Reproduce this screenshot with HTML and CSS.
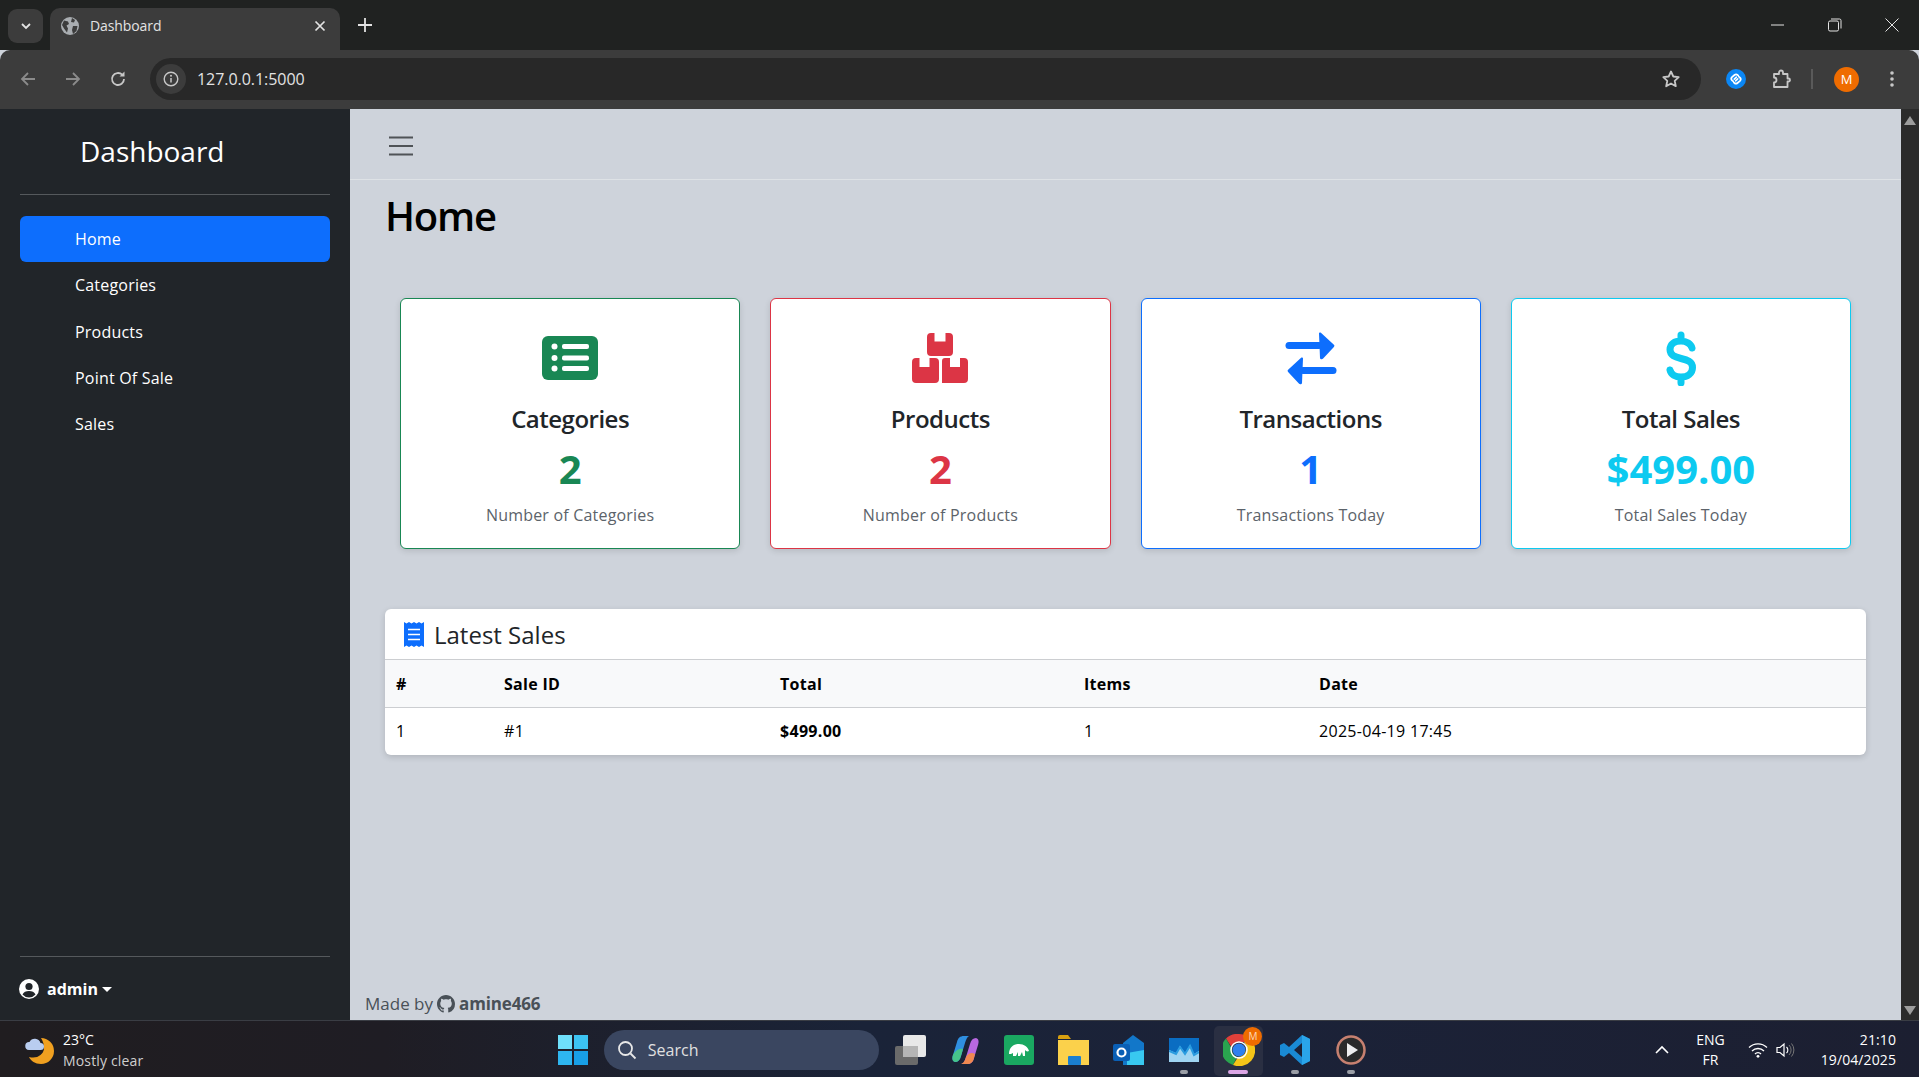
FILE: index.html
```html
<!DOCTYPE html>
<html lang="en">
<head>
    <meta charset="UTF-8">
    <title>Dashboard</title>
    <link rel="stylesheet" href="styles.css">
</head>
<body>
    <!-- Browser chrome -->
    <div class="tabstrip">
        <div class="tab-search">
            <svg width="12" height="12" viewBox="0 0 12 12"><path d="M2 4l4 4 4-4" fill="none" stroke="#e3e3e3" stroke-width="1.8"/></svg>
        </div>
        <div class="tab">
            <svg class="tab-globe" width="18" height="18" viewBox="0 0 18 18"><circle cx="9" cy="9" r="9" fill="#a9adb1"/><path d="M3 3.500l4 1 1 2.500-2.500 1.500 1.500 3-1 4-3-4-2-3.500zM11 1l3 2-1 2.500-3-.5zM12 9l4.500 0-1 5-3.500 3-1-4z" fill="#3c3c3c"/></svg>
            <span class="tab-title">Dashboard</span>
            <svg width="12" height="12" viewBox="0 0 12 12"><path d="M1.500 1.500l9 9M10.500 1.500l-9 9" stroke="#e3e3e3" stroke-width="1.700"/></svg>
        </div>
        <svg class="new-tab" width="14" height="14" viewBox="0 0 14 14"><path d="M7 0v14M0 7h14" stroke="#e3e3e3" stroke-width="1.800"/></svg>
        <div class="win-controls">
            <svg width="14" height="14" viewBox="0 0 14 14"><path d="M0 7h13" stroke="#e3e3e3" stroke-width="1"/></svg>
            <svg width="14" height="14" viewBox="0 0 14 14"><rect x="0.500" y="3" width="10" height="10" rx="1.500" fill="none" stroke="#e3e3e3"/><path d="M3 1h8.500a1.500 1.500 0 0 1 1.500 1.500v8" fill="none" stroke="#e3e3e3"/></svg>
            <svg width="14" height="14" viewBox="0 0 14 14"><path d="M0.500 0.500l13 13M13.500 0.500l-13 13" stroke="#e3e3e3" stroke-width="1"/></svg>
        </div>
    </div>
    <div class="toolbar">
        <svg class="nav-btn" width="18" height="18" viewBox="0 0 18 18"><path d="M16 9H3M9 3L3 9l6 6" fill="none" stroke="#8b8b8b" stroke-width="1.800"/></svg>
        <svg class="nav-btn" width="18" height="18" viewBox="0 0 18 18"><path d="M2 9h13M9 3l6 6-6 6" fill="none" stroke="#8b8b8b" stroke-width="1.800"/></svg>
        <svg class="nav-btn" width="18" height="18" viewBox="0 0 18 18"><path d="M15 9a6 6 0 1 1-1.800-4.300" fill="none" stroke="#c7c7c7" stroke-width="1.800"/><path d="M15.500 1.500v5h-5z" fill="#c7c7c7"/></svg>
        <div class="urlbar">
            <span class="site-info">
                <svg width="16" height="16" viewBox="0 0 16 16"><circle cx="8" cy="8" r="6.800" fill="none" stroke="#c7c7c7" stroke-width="1.400"/><path d="M8 7v4.500" stroke="#c7c7c7" stroke-width="1.500"/><circle cx="8" cy="4.800" r="1" fill="#c7c7c7"/></svg>
            </span>
            <span class="url-text">127.0.0.1:5000</span>
            <svg class="star" width="20" height="20" viewBox="0 0 20 20"><path d="M10 2.500l2.300 5 5.400.6-4 3.700 1.100 5.400-4.800-2.700-4.800 2.700 1.100-5.400-4-3.700 5.400-.6z" fill="none" stroke="#c7c7c7" stroke-width="1.800" stroke-linejoin="round"/></svg>
        </div>
        <div class="ext-icons">
            <svg width="20" height="20" viewBox="0 0 20 20"><circle cx="10" cy="10" r="10" fill="#0b87f5"/><path d="M12.300 6.600l-.7-.6a2.300 2.300 0 0 0-3.100 0L6 8.200a2.200 2.200 0 0 0 0 3.100l1.300 1.100M7.700 13.400l.7.600a2.300 2.300 0 0 0 3.100 0l2.500-2.200a2.200 2.200 0 0 0 0-3.100l-1.300-1.100M8.300 10.100l2.100-1.900M11.700 9.900l-2.100 1.900" fill="none" stroke="#fff" stroke-width="1.700" stroke-linecap="round"/></svg>
            <svg width="20" height="20" viewBox="0 0 20 20"><path d="M2 5h5V3.500a2 2 0 0 1 4 0V5h4.500v4.500h1a1.500 1.500 0 0 1 0 3h-1V18H2v-4.500a2.500 2.500 0 0 0 0-5z" fill="none" stroke="#c7c7c7" stroke-width="1.800" stroke-linejoin="round"/></svg>
            <span class="ext-sep"></span>
            <span class="avatar">M</span>
            <svg width="4" height="16" viewBox="0 0 4 16"><circle cx="2" cy="2" r="1.800" fill="#c7c7c7"/><circle cx="2" cy="8" r="1.800" fill="#c7c7c7"/><circle cx="2" cy="14" r="1.800" fill="#c7c7c7"/></svg>
        </div>
    </div>

    <!-- Page -->
    <div class="app">
        <aside class="sidebar">
            <div class="brand">Dashboard</div>
            <hr class="side-rule">
            <ul class="side-nav">
                <li class="side-link active">Home</li>
                <li class="side-link">Categories</li>
                <li class="side-link">Products</li>
                <li class="side-link">Point Of Sale</li>
                <li class="side-link">Sales</li>
            </ul>
            <hr class="side-rule">
            <div class="side-user">
                <svg width="20" height="20" viewBox="0 0 20 20"><circle cx="10" cy="10" r="10" fill="#fff"/><circle cx="10" cy="7.500" r="3.600" fill="#212529"/><path d="M3.500 15.500c1-2.500 3.500-3.500 6.500-3.500s5.500 1 6.500 3.500a8.500 8.500 0 0 1-13 0z" fill="#212529"/></svg>
                <strong>admin</strong>
                <span class="caret"></span>
            </div>
        </aside>

        <main class="main">
            <nav class="topbar">
                <svg width="26" height="22" viewBox="0 0 26 22"><path d="M1 2.500h24M1 11h24M1 19.500h24" stroke="#4f5357" stroke-width="2"/></svg>
            </nav>
            <div class="content">
                <h1 class="page-title">Home</h1>
                <div class="stat-row">
                    <div class="stat-card green">
                        <svg class="stat-icon" width="56" height="56" viewBox="0 0 56 56"><rect x="0" y="6" width="56" height="44" rx="6" fill="currentColor"/><circle cx="12.500" cy="16.500" r="3" fill="#fff"/><circle cx="12.500" cy="28" r="3" fill="#fff"/><circle cx="12.500" cy="38.500" r="3" fill="#fff"/><rect x="20" y="14" width="27" height="5" rx="2" fill="#fff"/><rect x="20" y="25.500" width="27" height="5" rx="2" fill="#fff"/><rect x="20" y="36" width="27" height="5" rx="2" fill="#fff"/></svg>
                        <h5 class="stat-title">Categories</h5>
                        <div class="stat-value">2</div>
                        <p class="stat-desc">Number of Categories</p>
                    </div>
                    <div class="stat-card red">
                        <svg class="stat-icon" width="56" height="56" viewBox="0 0 56 56"><path d="M19 3h3.500v8.500h11V3H37a4 4 0 0 1 4 4v15a4 4 0 0 1-4 4H19a4 4 0 0 1-4-4V7a4 4 0 0 1 4-4z" fill="currentColor"/><path d="M4 28h3.500v9h10v-9H23a4 4 0 0 1 4 4v17a4 4 0 0 1-4 4H4a4 4 0 0 1-4-4V32a4 4 0 0 1 4-4z" fill="currentColor"/><path d="M33 28h5v9h10v-9h4a4 4 0 0 1 4 4v17a4 4 0 0 1-4 4H30V31a3 3 0 0 1 3-3z" fill="currentColor"/></svg>
                        <h5 class="stat-title">Products</h5>
                        <div class="stat-value">2</div>
                        <p class="stat-desc">Number of Products</p>
                    </div>
                    <div class="stat-card blue">
                        <svg class="stat-icon" width="56" height="56" viewBox="0 0 56 56"><path d="M6 15.500h30" stroke="currentColor" stroke-width="7" stroke-linecap="round"/><path d="M36 3.500c0-1 1.200-1.400 1.900-.7l13 12a1.500 1.500 0 0 1 0 2.200l-11 11.800c-.9.800-2.900.400-2.900-.8z" fill="currentColor"/><path d="M50 40.500H20" stroke="currentColor" stroke-width="7" stroke-linecap="round"/><path d="M20 28.500c0-1-1.200-1.400-1.900-.7l-13 12a1.500 1.500 0 0 0 0 2.200l11 11.800c.9.800 2.900.400 2.900-.8z" fill="currentColor"/></svg>
                        <h5 class="stat-title">Transactions</h5>
                        <div class="stat-value">1</div>
                        <p class="stat-desc">Transactions Today</p>
                    </div>
                    <div class="stat-card cyan">
                        <svg class="stat-icon" width="56" height="56" viewBox="0 0 56 56"><path d="M28 5v6M28 47v6M39 18c-1-4-5.500-7-11-7-6.500 0-11 3-11 8.500 0 6 5.500 7.500 11 9 6 1.500 11.500 3 11.500 9 0 6-5 9.500-11.500 9.500-5.500 0-10-2.500-11-7" fill="none" stroke="currentColor" stroke-width="7" stroke-linecap="round"/></svg>
                        <h5 class="stat-title">Total Sales</h5>
                        <div class="stat-value">$499.00</div>
                        <p class="stat-desc">Total Sales Today</p>
                    </div>
                </div>

                <div class="sales-card">
                    <div class="sales-head">
                        <svg width="20" height="25" viewBox="0 0 20 25"><path d="M0 0l2.500 1.500L5 0l2.500 1.500L10 0l2.500 1.500L15 0l2.500 1.500L20 0v25l-2.500-1.500L15 25l-2.500-1.500L10 25l-2.500-1.500L5 25l-2.500-1.500L0 25z" fill="#0d6efd"/><path d="M4 7.500h12M4 12.500h12M4 17.500h12" stroke="#fff" stroke-width="1.700"/></svg>
                        <span>Latest Sales</span>
                    </div>
                    <table class="sales-table">
                        <thead>
                            <tr>
                                <th class="col-num">#</th>
                                <th class="col-id">Sale ID</th>
                                <th class="col-total">Total</th>
                                <th class="col-items">Items</th>
                                <th>Date</th>
                            </tr>
                        </thead>
                        <tbody>
                            <tr>
                                <td>1</td>
                                <td>#1</td>
                                <td><strong>$499.00</strong></td>
                                <td>1</td>
                                <td>2025-04-19 17:45</td>
                            </tr>
                        </tbody>
                    </table>
                </div>

                <footer class="made-by">
                    Made by
                    <svg width="18" height="18" viewBox="0 0 16 16"><path d="M8 0C3.580 0 0 3.580 0 8c0 3.540 2.290 6.530 5.470 7.590.4.070.55-.17.55-.38 0-.19-.01-.82-.01-1.490-2.010.37-2.530-.49-2.690-.94-.09-.23-.48-.94-.82-1.130-.28-.15-.68-.52-.01-.53.63-.01 1.080.58 1.230.82.72 1.210 1.870.87 2.330.66.07-.52.28-.87.51-1.070-1.780-.2-3.640-.89-3.640-3.950 0-.87.31-1.590.82-2.150-.08-.2-.36-1.020.08-2.120 0 0 .67-.21 2.200.82.64-.18 1.320-.27 2-.27s1.360.09 2 .27c1.530-1.040 2.200-.82 2.200-.82.44 1.100.16 1.920.08 2.120.51.56.82 1.270.82 2.150 0 3.070-1.870 3.750-3.650 3.950.29.25.54.73.54 1.480 0 1.070-.01 1.930-.01 2.200 0 .21.15.46.55.38A8.010 8.010 0 0 0 16 8c0-4.420-3.580-8-8-8" fill="#495057"/></svg>
                    <strong class="made-name">amine466</strong>
                </footer>
            </div>
        </main>

        <div class="scrollbar">
            <span class="arrow-up"></span>
            <span class="arrow-down"></span>
        </div>
    </div>

    <!-- Windows taskbar -->
    <div class="taskbar">
        <div class="weather">
            <svg width="30" height="28" viewBox="0 0 30 28"><path d="M17 2a13 13 0 0 1 0 26c-6 0-10-3-12-7 8 2 14-2 15-8 .3-4-1-8-3-11z" fill="#f0a020"/><path d="M5 14a4 4 0 0 1 .5-8 6 6 0 0 1 11 1 3.500 3.500 0 0 1 0 7z" fill="#b9cdf0"/></svg>
            <div class="weather-text">
                <div>23°C</div>
                <div class="weather-sub">Mostly clear</div>
            </div>
        </div>

        <div class="task-center">
            <svg class="tb-icon" width="30" height="30" viewBox="0 0 30 30"><rect x="0" y="0" width="14" height="14" fill="#6fe0fb"/><rect x="16" y="0" width="14" height="14" fill="#3cc3f2"/><rect x="0" y="16" width="14" height="14" fill="#2eb6f0"/><rect x="16" y="16" width="14" height="14" fill="#189fe6"/></svg>
            <div class="tb-search">
                <svg width="20" height="20" viewBox="0 0 20 20"><circle cx="8.500" cy="8.500" r="6.500" fill="none" stroke="#e8e8e8" stroke-width="1.800"/><path d="M13.500 13.500l5 5" stroke="#e8e8e8" stroke-width="1.800"/></svg>
                <span>Search</span>
            </div>
            <svg class="tb-icon" width="32" height="30" viewBox="0 0 32 30"><rect x="0" y="11" width="23" height="19" rx="2" fill="#6a6a6a"/><rect x="8" y="0" width="23" height="22" rx="2" fill="#e8e8e8"/><rect x="8" y="11" width="15" height="11" fill="#b5b5b5"/></svg>
            <svg class="tb-icon" width="30" height="30" viewBox="0 0 30 30"><path d="M14 1c-4 0-6 2-7 6L3 20c-1 3-1 6 2 7 3 0 5-2 6-6l4-13c1-3 2-6 4-7z" fill="#2f8fe0"/><path d="M3 20c-1 3-1 6 2 7 3 0 5-2 6-6l2-7c-4-1-8 2-10 6z" fill="#46c48a"/><path d="M17 29c4 0 6-2 7-6l4-13c1-3 1-6-2-7-3 0-5 2-6 6l-4 13c-1 3-2 6-4 7z" fill="#b868e0"/><path d="M17 29c4 0 6-2 7-6l1-4c-3-2-7-1-9 3l-1 3c-1 2-2 3-4 4z" fill="#f08850"/></svg>
            <svg class="tb-icon" width="30" height="30" viewBox="0 0 30 30"><rect width="30" height="30" rx="3" fill="#1aa861"/><path d="M5 19c0-7 5-10 10-10 5 0 9 3 10 7-2 1-3 0-4-1v6h-2l-1-4-2 4h-2v-4l-2 4H9v-3l-2 1z" fill="#fff"/></svg>
            <svg class="tb-icon" width="31" height="30" viewBox="0 0 31 30"><path d="M0 2a2 2 0 0 1 2-2h8l3 4h-13z" fill="#d8a010"/><path d="M0 5h31v25H0z" fill="#fbd14b"/><rect x="10" y="21" width="13" height="9" rx="1" fill="#1a7fd0"/></svg>
            <svg class="tb-icon" width="31" height="30" viewBox="0 0 31 30"><path d="M10 8L20 0l11 8v22H10z" fill="#1277c9"/><path d="M14 18l17-3v15H14z" fill="#38c8f0"/><rect x="0" y="9" width="17" height="17" rx="2" fill="#0a5fb5"/><circle cx="8.500" cy="17.500" r="4" fill="none" stroke="#fff" stroke-width="2.200"/></svg>
            <span class="tb-app running">
                <svg width="30" height="24" viewBox="0 0 30 24"><rect width="30" height="24" fill="#9fd4f2"/><path d="M0 0h30v13l-5 3-4-9-5 8-5-7-4 7-7-3z" fill="#0a6dc2"/><path d="M0 13l7 3 4-7 5 7 5-8 4 9 5-3" fill="none" stroke="#2a9ce0" stroke-width="2"/></svg>
            </span>
            <span class="tb-app active">
                <svg width="32" height="32" viewBox="0 0 32 32"><path d="M16 0a16 16 0 0 1 13.900 8H16a8 8 0 0 0-7.500 5L3 4.500A16 16 0 0 1 16 0z" fill="#e0403a"/><path d="M3 4.500L9 15a8 8 0 0 0 5 8l-4 8A16 16 0 0 1 3 4.500z" fill="#2aa44f"/><path d="M29.900 8A16 16 0 0 1 10 31l5-8a8 8 0 0 0 8-7 8 8 0 0 0-2-8z" fill="#f5c518"/><circle cx="16" cy="16" r="6.500" fill="#2f80ed"/><circle cx="16" cy="16" r="8" fill="none" stroke="#fff" stroke-width="1.500"/></svg>
                <span class="chrome-badge">M</span>
            </span>
            <span class="tb-app running">
                <svg width="30" height="30" viewBox="0 0 30 30"><path d="M22 0l8 4v22l-8 4-13-12-5 4-4-2V10l4-2 5 4zM22 8l-8 7 8 7z" fill="#1a8ad4"/><path d="M22 0l8 4v22l-8 4z" fill="#2aa5ea"/></svg>
            </span>
            <span class="tb-app running">
                <svg width="30" height="30" viewBox="0 0 30 30"><circle cx="15" cy="15" r="13.500" fill="#2a2a2a" stroke="#c68070" stroke-width="2.500"/><path d="M11 8l11 7-11 7z" fill="#eee"/></svg>
            </span>
        </div>

        <div class="tray">
            <svg class="tray-caret" width="14" height="14" viewBox="0 0 14 14"><path d="M1 10l6-6 6 6" fill="none" stroke="#fff" stroke-width="1.600"/></svg>
            <div class="tray-lang"><div>ENG</div><div>FR</div></div>
            <svg width="20" height="16" viewBox="0 0 20 16"><path d="M1 5.500a13 13 0 0 1 18 0M4 9a8.500 8.500 0 0 1 12 0M7 12a4 4 0 0 1 6 0" fill="none" stroke="#fff" stroke-width="1.300"/><circle cx="10" cy="14.300" r="1.400" fill="#fff"/></svg>
            <svg class="tray-sound" width="20" height="16" viewBox="0 0 20 16"><path d="M1 5.500h3L8 2v12l-4-3.500H1z" fill="none" stroke="#fff" stroke-width="1.200"/><path d="M10.500 5a4 4 0 0 1 0 6" fill="none" stroke="#fff" stroke-width="1.100"/><path d="M13 3a7 7 0 0 1 0 10M15.500 1.500a10 10 0 0 1 0 13" fill="none" stroke="#777" stroke-width="1"/></svg>
            <div class="tray-clock"><div>21:10</div><div>19/04/2025</div></div>
        </div>
    </div>
</body>
</html>
```

FILE: styles.css
```css
* {
    box-sizing: border-box;
}
html, body {
    height: 100%;
}
body {
    margin: 0;
    display: flex;
    flex-direction: column;
    overflow: hidden;
    font-family: "Open Sans", "Noto Sans", Arial, sans-serif;
    font-size: 16px;
    color: #212529;
    background: #ced3db;
}

/* browser chrome */
.tabstrip {
    height: 50px;
    flex: none;
    display: flex;
    align-items: flex-start;
    background: #202221;
    padding: 8px 0 0 8px;
}
.tab-search {
    width: 35px;
    height: 34px;
    margin-top: 1px;
    background: #3c3c3c;
    border-radius: 9px;
    display: flex;
    align-items: center;
    justify-content: center;
}
.tab {
    width: 290px;
    height: 42px;
    margin-left: 7px;
    padding: 0 14px 7px 11px;
    background: #3c3c3c;
    border-radius: 10px 10px 0 0;
    display: flex;
    align-items: center;
    color: #e3e3e3;
}
.tab-globe {
    flex: none;
}
.tab-title {
    flex: 1;
    margin-left: 11px;
    font-size: 14px;
    letter-spacing: -0.100px;
}
.new-tab {
    margin: 10px 0 0 18px;
}
.win-controls {
    margin-left: auto;
    display: flex;
    gap: 43px;
    padding: 10px 20px 0 0;
}
.toolbar {
    height: 59px;
    flex: none;
    display: flex;
    align-items: center;
    background: #3c3c3c;
    padding: 0 25px 1px 19px;
    gap: 27px;
    border-radius: 10px 10px 0 0;
}
.nav-btn {
    flex: none;
}
.urlbar {
    flex: 1;
    height: 42px;
    margin-left: -4px;
    background: #282828;
    border-radius: 21px;
    display: flex;
    align-items: center;
    padding: 0 20px 0 6px;
    color: #e3e3e3;
}
.site-info {
    width: 30px;
    height: 30px;
    background: #3c3c3c;
    border-radius: 50%;
    display: flex;
    align-items: center;
    justify-content: center;
}
.url-text {
    flex: 1;
    margin-left: 11px;
    font-size: 16px;
    letter-spacing: -0.050px;
}
.ext-icons {
    display: flex;
    align-items: center;
    margin-left: -2.500px;
    gap: 26px;
}
.ext-sep {
    width: 2px;
    height: 20px;
    background: #5a5a5a;
    margin: 0 -5px 0 -6.500px;
}
.avatar {
    width: 25px;
    height: 25px;
    margin-right: 5px;
    border-radius: 50%;
    background: #ef6c00;
    color: #fff;
    font-size: 13px;
    display: flex;
    align-items: center;
    justify-content: center;
}

/* page layout */
.app {
    flex: 1;
    min-height: 0;
    display: flex;
}
.sidebar {
    width: 350px;
    flex: none;
    display: flex;
    flex-direction: column;
    background: #212529;
    color: #fff;
    padding: 23px 20px 15px;
}
.brand {
    font-size: 28px;
    line-height: 38px;
    padding: 0 0 0 60px;
    margin-bottom: 24px;
}
.side-rule {
    margin: 0;
    border: 0;
    border-top: 1px solid #55595c;
}
.side-nav {
    flex: 1;
    list-style: none;
    margin: 21px 0 0;
    padding: 0;
}
.side-link {
    height: 46.300px;
    line-height: 46px;
    padding-left: 55px;
    border-radius: 6px;
    font-size: 16px;
    letter-spacing: 0.200px;
}
.side-link.active {
    background: #0d6efd;
}
.side-user {
    display: flex;
    align-items: center;
    gap: 8px;
    height: 32px;
    margin-top: 16px;
    font-size: 16px;
}
.side-user svg {
    margin-left: -1px;
}
.caret {
    width: 0;
    height: 0;
    margin-left: -4px;
    border-left: 5px solid transparent;
    border-right: 5px solid transparent;
    border-top: 5px solid #fff;
}
.main {
    flex: 1;
    min-width: 0;
    display: flex;
    flex-direction: column;
    background: #ced3db;
}
.topbar {
    height: 71px;
    flex: none;
    display: flex;
    align-items: center;
    padding: 3px 0 0 38px;
    border-bottom: 1px solid #dee2e6;
}
.content {
    flex: 1;
    min-height: 0;
    display: flex;
    flex-direction: column;
    padding: 0 35px 0 35px;
}
.page-title {
    margin: 12px 0 0;
    font-size: 40px;
    line-height: 48px;
    font-weight: 600;
    letter-spacing: -1.200px;
    color: #000;
}
.stat-row {
    display: grid;
    grid-template-columns: repeat(4, 1fr);
    gap: 30px;
    margin-top: 58px;
    padding: 0 15px;
}
.stat-card {
    height: 251px;
    background: #fff;
    border: 1px solid currentColor;
    border-radius: 6px;
    box-shadow: 0 2px 6px rgba(0,0,0,0.12);
    display: flex;
    flex-direction: column;
    align-items: center;
    padding-top: 31px;
}
.stat-card.green { color: #198754; }
.stat-card.red { color: #dc3545; }
.stat-card.blue { color: #0d6efd; }
.stat-card.cyan { color: #0dcaf0; }
.stat-icon {
    flex: none;
}
.stat-title {
    margin: 17px 0 0;
    font-size: 24px;
    line-height: 32px;
    font-weight: 600;
    letter-spacing: -0.500px;
    color: #212529;
}
.stat-value {
    margin-top: 10px;
    font-size: 40px;
    line-height: 48px;
    font-weight: 700;
}
.stat-desc {
    margin: 10px 0 0;
    font-size: 16px;
    line-height: 24px;
    letter-spacing: 0.200px;
    color: #5c636a;
}
.sales-card {
    margin-top: 60px;
    background: #fff;
    border-radius: 6px;
    box-shadow: 0 2px 6px rgba(0,0,0,0.15);
    overflow: hidden;
}
.sales-head {
    height: 50px;
    display: flex;
    align-items: center;
    gap: 10px;
    padding-left: 19px;
    font-size: 24px;
    font-weight: 500;
}
.sales-table {
    width: 100%;
    border-collapse: collapse;
    font-size: 16px;
    letter-spacing: 0.300px;
    color: #000;
}
.sales-table th, .sales-table td {
    height: 48px;
    padding: 0 11px;
    text-align: left;
    border-top: 1px solid #ccced1;
}
.sales-table td {
    height: 47px;
}
.sales-table th {
    background: #f8f9fa;
    font-weight: 700;
}
.col-num { width: 108px; }
.col-id { width: 276px; }
.col-total { width: 304px; }
.col-items { width: 235px; }
.made-by {
    margin-top: auto;
    margin-left: -20px;
    padding-bottom: 2px;
    display: flex;
    align-items: center;
    gap: 4px;
    font-size: 17px;
    line-height: 28px;
    color: #495057;
}
.made-name {
    letter-spacing: -0.150px;
}
.scrollbar {
    width: 18px;
    flex: none;
    background: #2b2b2b;
    display: flex;
    flex-direction: column;
    justify-content: space-between;
    align-items: center;
    padding: 7px 0 5px;
}
.arrow-up {
    border-left: 6px solid transparent;
    border-right: 6px solid transparent;
    border-bottom: 9px solid #9d9d9d;
}
.arrow-down {
    border-left: 6px solid transparent;
    border-right: 6px solid transparent;
    border-top: 9px solid #9d9d9d;
}

/* taskbar */
.taskbar {
    height: 57px;
    flex: none;
    display: grid;
    grid-template-columns: 1fr auto 1fr;
    align-items: center;
    background: linear-gradient(90deg, #201d20 0%, #1f1d24 20%, #1a2338 45%, #1b2238 65%, #1c1f31 100%);
    border-top: 1px solid #3a3d44;
    padding-top: 1px;
    color: #fff;
}
.weather {
    display: flex;
    align-items: center;
    gap: 9px;
    padding-left: 24px;
    font-size: 14px;
    line-height: 21px;
}
.weather-sub {
    color: #cfcfcf;
    letter-spacing: 0.150px;
}
.task-center {
    display: flex;
    align-items: center;
    gap: 23.800px;
    margin-left: 6px;
}
.tb-search {
    width: 275px;
    height: 40px;
    margin: 0 -8px 0 -8px;
    padding-left: 13px;
    display: flex;
    align-items: center;
    gap: 11px;
    border-radius: 20px;
    background: #3a4660;
    color: #e0e0e0;
    font-size: 16px;
}
.tb-icon {
    flex: none;
}
.tb-app {
    position: relative;
    width: 32px;
    height: 30px;
    display: flex;
    align-items: center;
    justify-content: center;
}
.tb-app.running::after {
    content: "";
    position: absolute;
    left: 12px;
    bottom: -9px;
    width: 8px;
    height: 4px;
    border-radius: 2px;
    background: #9a9ea6;
}
.tb-app.active::before {
    content: "";
    position: absolute;
    left: -9px;
    top: -9px;
    width: 49px;
    height: 50px;
    border-radius: 5px;
    background: #2a2f42;
}
.tb-app.active::after {
    content: "";
    position: absolute;
    left: 5px;
    bottom: -9px;
    width: 20px;
    height: 4px;
    border-radius: 2px;
    background: #dba6e6;
}
.tb-app svg {
    position: relative;
}
.chrome-badge {
    position: absolute;
    top: -8px;
    right: -7px;
    width: 19px;
    height: 19px;
    border-radius: 50%;
    background: #ef6c00;
    color: #ffd9b8;
    font-size: 10px;
    text-align: center;
    line-height: 19px;
}
.tray {
    display: flex;
    align-items: center;
    justify-content: flex-end;
    gap: 14px;
    padding-right: 23px;
    font-size: 14px;
    line-height: 20px;
}
.tray-lang {
    text-align: center;
    margin: 0 9px 0 13px;
}
.tray-sound {
    margin-left: -6px;
}
.tray-clock {
    text-align: right;
    margin-left: 11px;
    letter-spacing: 0.100px;
}
```
